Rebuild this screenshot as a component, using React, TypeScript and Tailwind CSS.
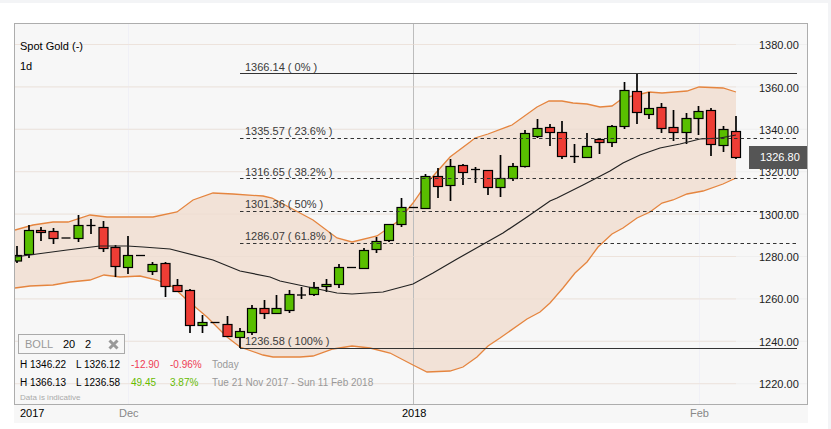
const candles: [number, number, number, number, number, 0 | 1][] = [
  [17, 246, 263, 255.5, 261, 1],[29, 225, 258, 230.5, 254.5, 1],[41, 227, 241, 230.5, 232.5, 0],[53.5, 228, 244, 231.5, 238.5, 0],
  [66, 238, 238, 238, 238, 1],[78.5, 215, 242, 225.5, 238.5, 1],[91, 219, 234, 225.5, 225.5, 1],[103.5, 221, 252, 227.5, 248.5, 0],
  [115.5, 245, 277, 247.5, 266.5, 0],[128, 236, 274, 255.5, 267.5, 1],[140.5, 255.5, 255.5, 255.5, 255.5, 1],[152.5, 262, 275, 264.5, 271.5, 1],
  [165.5, 262, 297, 263.5, 286.5, 0],[177.5, 279, 292, 285.5, 291.5, 0],[190, 289, 333, 290.5, 325.5, 0],[202.5, 315, 333, 322.5, 325.5, 1],
  [215, 322.5, 322.5, 322.5, 322.5, 1],[227.5, 316, 337, 324.5, 336.5, 0],[240, 328, 348, 331.5, 337.5, 1],[252, 305, 335, 308.5, 332.5, 1],
  [264.5, 300, 319, 308.5, 313.5, 0],[276.5, 295, 313.5, 308.5, 313.5, 1],[289.5, 290, 313, 294.5, 310.5, 1],[301.5, 287, 299, 295, 295, 1],
  [314, 282, 296, 287.5, 294.5, 1],[326.5, 279, 292, 284.5, 286.5, 1],[339, 264, 288, 267.5, 284.5, 1],[351.5, 267.5, 267.5, 267.5, 267.5, 1],
  [364, 248, 269, 250.5, 268.5, 1],[376.5, 237, 253, 241.5, 249.5, 1],[389, 224.5, 242, 224.5, 240.5, 1],[401.5, 198, 227, 207.5, 224.5, 1],
  [413.5, 207.5, 207.5, 207.5, 207.5, 1],[425.5, 174, 208.5, 176.5, 208.5, 1],[438, 168, 198, 176.5, 186.5, 0],[450.5, 159, 201, 166.5, 185.5, 1],
  [463, 164, 185, 165.5, 172.5, 0],[475.5, 167, 183, 169.5, 169.5, 1],[488, 170.5, 195, 170.5, 187.5, 0],[500.5, 155, 197, 178.5, 187.5, 1],
  [513, 163, 181, 166.5, 178.5, 1],[525, 130, 167.5, 133.5, 166.5, 1],[537.5, 119, 138, 128.5, 136.5, 1],[550, 124, 146, 127.5, 132.5, 0],
  [562, 121, 159, 132.5, 156.5, 0],[574.5, 144, 163, 156.5, 156.5, 1],[587, 133, 157.5, 146.5, 157.5, 1],[599.5, 139.5, 154, 139.5, 142.5, 0],
  [612, 125, 147, 126.5, 142.5, 1],[624.5, 82, 129, 90.5, 126.5, 1],[637, 74, 124, 91.5, 112.5, 0],[649, 92, 119, 108.5, 114.5, 1],
  [661.5, 103, 133, 107.5, 128.5, 0],[673.5, 110, 141, 127.5, 132.5, 0],[686.5, 113, 144, 118.5, 132.5, 1],[698.5, 106, 135, 111.5, 118.5, 1],
  [711, 108, 156, 110.5, 144.5, 0],[723.5, 126, 152, 129.5, 145.5, 1],[736, 116, 159, 131.5, 157.5, 0],
];

const upper = "15,230 33,225 53,222 68,222 90,215 107,217 153,217 177,212 193,200 213,193 233,194 263,196 272,198 313,220 337,238 352,242 377,236 397,222 413,203 427,183 450,157 470,142 475,138 488,134 512,125 537,107 549,101 562,101 573,103 587,104 600,107 612,106 623,98 637,95 649,92 662,93 687,91 699,87 723,88 736,92";
const lower = "736,178 723,184 703,191 687,194 673,200 662,203 650,212 637,218 623,228 612,234 598,247 587,262 575,273 563,288 550,303 540,312 527,319 500,338 488,346 477,357 463,367 450,371 427,372 413,365 390,353 370,348 352,346 333,349 313,356 300,357 273,357 263,355 240,347 227,337 207,317 187,300 173,287 157,280 140,276 120,277 104,275 90,280 70,282 53,285 30,286 15,288";
const middle = "15,257 37,254 67,250 100,246 127,246 143,247 170,249 213,260 240,271 270,277 280,281 313,288 337,293 352,294 383,292 413,284 433,273 457,259 480,246 503,233 527,217 550,201 557,198 583,185 610,171 623,163 640,155 660,148 680,144 700,139 720,138 736,135";

const fibs: [string, number, boolean, number][] = [
  ["1366.14 ( 0% )", 73, false, 67],["1335.57 ( 23.6% )", 138, true, 131],["1316.65 ( 38.2% )", 178, true, 172],
  ["1301.36 ( 50% )", 211, true, 204],["1286.07 ( 61.8% )", 243, true, 236],["1236.58 ( 100% )", 348, false, 341],
];
const prices: [string, number][] = [["1380.00",15],["1360.00",58],["1340.00",100],["1320.00",142],["1300.00",185],["1280.00",227],["1260.00",269],["1240.00",312],["1220.00",354]];

function Chart() {
  return (
    <svg className="absolute left-[-15px] top-[-24px]" width="831" height="429">
      {prices.map((_, i) => (
        <line key={i} x1="15" x2="807" y1={44.5 + i * 42.4} y2={44.5 + i * 42.4} stroke="#efefef" />
      ))}
      <line x1="128.5" x2="128.5" y1="24" y2="404" stroke="#f0f0f6" />
      <line x1="699.5" x2="699.5" y1="24" y2="404" stroke="#f0f0f6" />
      <polygon points={`${upper} ${lower}`} fill="#f2e2d7" />
      <line x1="413.5" x2="413.5" y1="24" y2="404" stroke="#bdbdbd" />
      {prices.map((_, i) => (
        <line key={i} x1="15" x2="736" y1={44.5 + i * 42.4} y2={44.5 + i * 42.4} stroke="#ecdcd1" opacity="0.6" />
      ))}
      <polyline points={upper} fill="none" stroke="#e5853f" strokeWidth="1.3" />
      <polyline points={lower} fill="none" stroke="#e5853f" strokeWidth="1.3" />
      {candles.map(([x, hi, lo, top, bottom, up], i) => {
        const doji = bottom - top < 0.5;
        return (
          <g key={i}>
            {hi !== lo && <line x1={x} x2={x} y1={hi} y2={lo} stroke="#000" strokeWidth="1.7" />}
            {doji ? (
              <line x1={x - 4.5} x2={x + 4.5} y1={top} y2={top} stroke="#000" strokeWidth="1.3" />
            ) : (
              <rect x={Math.max(x - 4.5, 15)} y={top} width={x - 4.5 < 15 ? x + 4.5 - 15 : 9} height={bottom - top} fill={up ? "#59bf00" : "#ee3d35"} stroke="#000" strokeWidth="1.2" />
            )}
          </g>
        );
      })}
      <polyline points={middle} fill="none" stroke="#222" strokeWidth="1.2" />
      {fibs.map(([, y, dash]) => (
        <line key={y} x1="240" x2="797" y1={y + 0.5} y2={y + 0.5} stroke="#333" strokeDasharray={dash ? "3.5 3" : undefined} />
      ))}
    </svg>
  );
}

export default function App() {
  return (
    <div className="w-[831px] h-[429px] bg-white overflow-hidden font-['Liberation_Sans',Arial,sans-serif] text-[11px]">
      <div className="h-[3px] bg-[#f3f4f6]" />
      <div className="flex h-[426px]">
        <div className="w-[828px]">
          <div className="mt-[20px] ml-[14px] w-[794px] h-[382px] border border-[#adadad] bg-[#f7f7f7] relative overflow-hidden">
            <Chart />
            <div className="absolute left-[5px] top-[15px] text-black flex flex-col gap-[6px] leading-[14px]">
              <span>Spot Gold (-)</span>
              <span>1d</span>
            </div>
            {fibs.map(([t, y, , c]) => (
              <span key={y} className="absolute left-[230px] leading-[12px] text-[#3a3a3a] whitespace-nowrap" style={{ top: c - 30 }}>{t}</span>
            ))}
            {prices.map(([p, t]) => (
              <span key={p} className="absolute left-[744px] leading-[12px] text-[#222] whitespace-nowrap" style={{ top: t }}>{p}</span>
            ))}
            <div className="absolute left-[734px] top-[122px] w-[58px] h-[23px] bg-[#555] text-white flex items-center pl-[11px] text-[11px]">1326.80</div>
            <div className="absolute left-[3px] bottom-0 w-[320px]">
              <div className="w-[107px] h-[20px] border border-[#aaa] bg-[#f7f7f7] flex items-center pl-[6px] text-[11px]">
                <span className="text-[#999] w-[38px] shrink-0">BOLL</span>
                <span className="text-black w-[22px] shrink-0">20</span>
                <span className="text-black">2</span>
                <svg className="ml-auto mr-[5px]" width="11" height="11" viewBox="0 0 11 11"><path d="M1.5 1.5l8 8M9.5 1.5l-8 8" stroke="#999" strokeWidth="3" /></svg>
              </div>
              <div className="flex h-[18px] items-center mt-[1px] pl-[2px] text-[10px] whitespace-nowrap">
                <span className="w-[56px] shrink-0 text-black">H 1346.22</span><span className="w-[55px] shrink-0 text-black">L 1326.12</span>
                <span className="w-[39px] shrink-0 text-[#ee3d55]">-12.90</span><span className="w-[42px] shrink-0 text-[#ee3d55]">-0.96%</span><span className="text-[#999]">Today</span>
              </div>
              <div className="flex h-[18px] items-center pl-[2px] text-[10px] whitespace-nowrap">
                <span className="w-[56px] shrink-0 text-black">H 1366.13</span><span className="w-[55px] shrink-0 text-black">L 1236.58</span>
                <span className="w-[39px] shrink-0 text-[#66bb00]">49.45</span><span className="w-[42px] shrink-0 text-[#66bb00]">3.87%</span><span className="text-[#999]">Tue 21 Nov 2017 - Sun 11 Feb 2018</span>
              </div>
              <div className="text-[8px] pl-[2px] text-[#aaa] h-[13px] leading-[13px]">Data is indicative</div>
            </div>
          </div>
          <div className="ml-[14px] w-[794px] h-[18px] bg-[#f7f7f7] relative text-[11px] leading-[16px]">
            <span className="absolute left-[6px] top-0 text-black">2017</span>
            <span className="absolute left-[105px] top-0 text-[#888]">Dec</span>
            <span className="absolute left-[388px] top-0 text-black">2018</span>
            <span className="absolute left-[676px] top-0 text-[#888]">Feb</span>
          </div>
        </div>
        <div className="w-[3px] bg-[#f3f4f6]" />
      </div>
    </div>
  );
}
